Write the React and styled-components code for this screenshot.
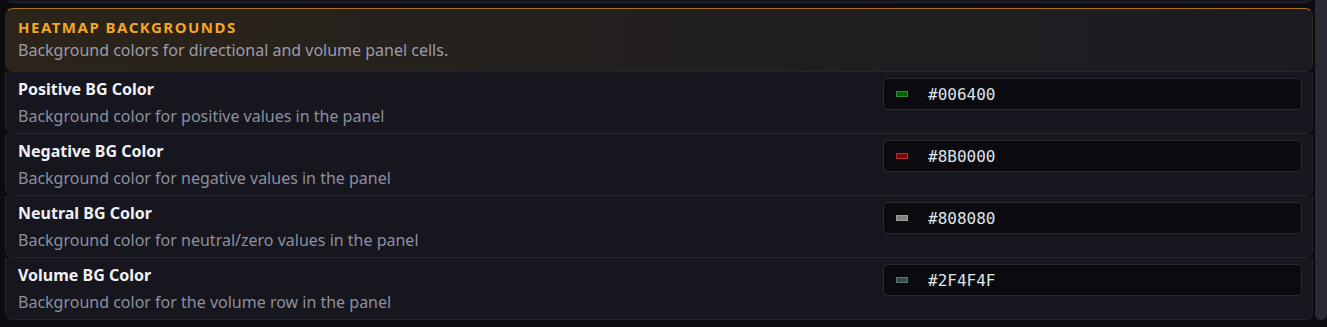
import React from 'react';
import styled, { createGlobalStyle } from 'styled-components';

const GlobalStyle = createGlobalStyle`
  html, body {
    margin: 0;
    padding: 0;
    background: #0c0c10;
  }
  body {
    font-family: 'Noto Sans', 'Open Sans', sans-serif;
  }
`;

const Page = styled.div`
  display: flex;
  height: 327px;
  overflow: hidden;
  background: #0c0c10;
`;

const Pane = styled.div`
  flex: 1;
  display: flex;
  flex-direction: column;
  padding: 0 2px 0 5px;
  min-width: 0;
`;

const Scrollbar = styled.div`
  width: 12px;
  height: 320px;
  background: #2a2a35;
  border-radius: 0 0 6px 6px;
`;

const Header = styled.div`
  margin-top: 5px;
  padding: 9px 12px 11px;
  border: 1px solid #2a2620;
  border-top-color: #a8721f;
  border-radius: 8px;
  background: linear-gradient(90deg, #2c2419 0%, #211f1f 55%, #1c1b21 100%);
`;

const Title = styled.div`
  font-size: 15px;
  font-weight: 700;
  line-height: 18px;
  letter-spacing: 1.5px;
  color: #f5a623;
`;

const Subtitle = styled.div`
  margin-top: 4px;
  font-size: 16px;
  line-height: 20px;
  color: #9a9cab;
`;

const Row = styled.div`
  display: grid;
  grid-template-columns: 1fr 419px;
  column-gap: 16px;
  padding: 6px 10px 7px 12px;
  background: #16161e;
  border: 1px solid #24242e;
  border-top: none;
  border-radius: 0 0 8px 8px;
  margin-top: ${(p) => (p.$offset ? `-${p.$offset}px` : '0')};
`;

const Info = styled.div`
  padding-top: 1px;
`;

const Label = styled.div`
  font-size: 16px;
  font-weight: 700;
  line-height: 20px;
  color: #f1f1f5;
`;

const Hint = styled.div`
  margin-top: 7px;
  font-size: 16px;
  line-height: 20px;
  color: #8c8f9e;
`;

const ColorField = styled.div`
  display: flex;
  align-items: center;
  height: 30px;
  padding: 0 12px;
  gap: 20px;
  background: #0b0b0f;
  border: 1px solid #2a2a33;
  border-radius: 4px;
`;

const Swatch = styled.span`
  width: 10px;
  height: 4px;
  background: ${(p) => p.$color};
  border: 1px solid rgba(255, 255, 255, 0.22);
`;

const HexValue = styled.span`
  font-family: 'DejaVu Sans Mono', 'Liberation Mono', monospace;
  font-size: 16px;
  color: #dfe3ea;
`;

const settings = [
  { label: 'Positive BG Color', hint: 'Background color for positive values in the panel', value: '#006400' },
  { label: 'Negative BG Color', hint: 'Background color for negative values in the panel', value: '#8B0000' },
  { label: 'Neutral BG Color', hint: 'Background color for neutral/zero values in the panel', value: '#808080' },
  { label: 'Volume BG Color', hint: 'Background color for the volume row in the panel', value: '#2F4F4F' },
];

const SettingRow = ({ label, hint, value, offset }) => (
  <Row $offset={offset}>
    <Info>
      <Label>{label}</Label>
      <Hint>{hint}</Hint>
    </Info>
    {value ? (
      <div>
        <ColorField>
          <Swatch $color={value} />
          <HexValue>{value}</HexValue>
        </ColorField>
      </div>
    ) : (
      <div />
    )}
  </Row>
);

export default function App() {
  return (
    <Page>
      <GlobalStyle />
      <Pane>
        <SettingRow
          offset={59}
          label="Panel Display Mode"
          hint="Display type of panel layout (compact or expanded)"
        />
        <Header>
          <Title>HEATMAP BACKGROUNDS</Title>
          <Subtitle>Background colors for directional and volume panel cells.</Subtitle>
        </Header>
        {settings.map((s) => (
          <SettingRow key={s.label} {...s} />
        ))}
      </Pane>
      <Scrollbar />
    </Page>
  );
}
